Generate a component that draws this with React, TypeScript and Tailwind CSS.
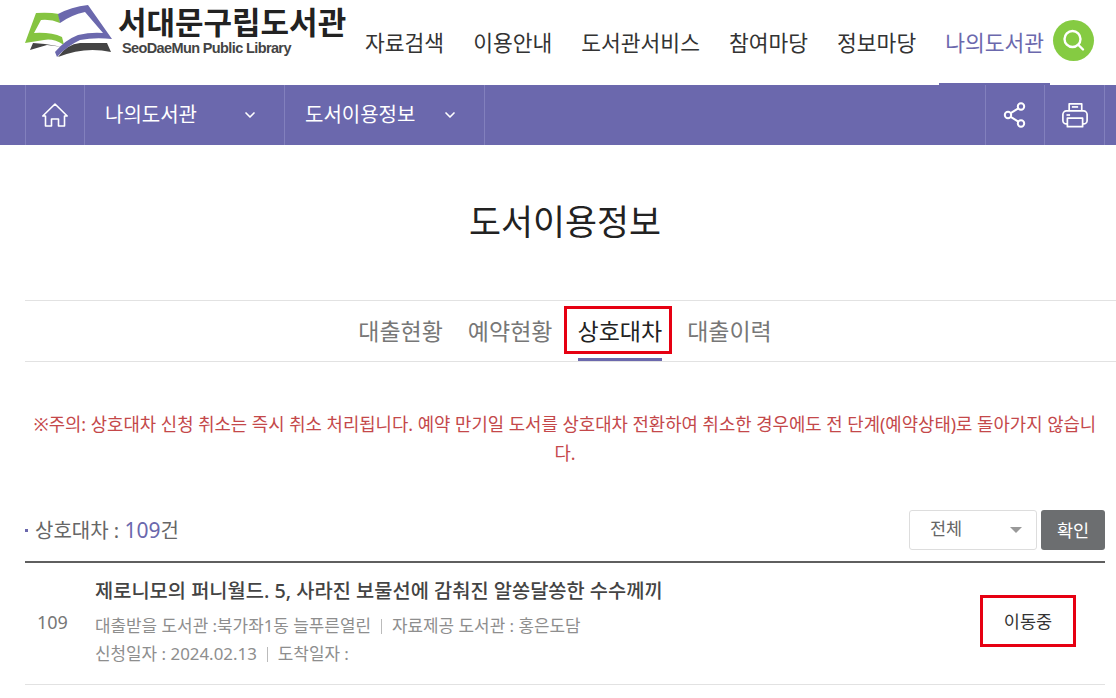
import { ChevronDown } from "lucide-react";

const font = { fontFamily: '"Noto Sans", "Noto Sans CJK KR", sans-serif' };

const menus = ["자료검색", "이용안내", "도서관서비스", "참여마당", "정보마당"];
const tabs = ["대출현황", "예약현황", "상호대차", "대출이력"];

function BookLogo() {
  return (
    <svg width="90" height="60" viewBox="0 0 90 60" className="shrink-0">
      <path d="M5 50 L8 43 L20 44 L38 47 L22 45 Z" fill="#444" />
      <path d="M33 57 Q42 44 55 43 L82 43 L86 52 Q60 46 33 57 Z" fill="#444" />
      <path d="M0 43 L11 13 Q24 12 34 14 L35 23 Q26 19 16 20 L9 33 Q26 32 37 37 L39 45 Q28 38 19 40 Z" fill="#85c441" />
      <path d="M33 14 Q46 7 63 5 L87 39 Q70 37 55 40 Q42 46 32 57 L30 52 Q40 40 53 35 Q66 32 78 33 L60 12 Q46 15 35 23 Z" fill="#6b68ad" />
    </svg>
  );
}

function Header() {
  return (
    <header className="flex h-[85px] items-start pl-[25px]">
      <div className="flex w-[340px] shrink-0 items-start">
        <BookLogo />
        <div className="ml-[3px] flex flex-col pt-[5px]">
          <span className="text-[31px] leading-[34px] font-bold whitespace-nowrap text-[#222]">서대문구립도서관</span>
          <span className="ml-[4px] text-[14.5px] leading-[18px] font-bold tracking-[-0.62px] whitespace-nowrap text-[#444]" style={{ fontFamily: '"Liberation Sans", sans-serif' }}>SeoDaeMun Public Library</span>
        </div>
      </div>
      <nav className="flex h-[85px] items-start">
        {menus.map((m) => (
          <a key={m} className="mt-[25px] mr-[29px] text-[21.5px] leading-[36px] whitespace-nowrap text-[#333]">{m}</a>
        ))}
        <div className="relative flex h-[85px] items-start">
          <a className="mt-[25px] text-[21.5px] leading-[36px] whitespace-nowrap text-[#6b68ad]">나의도서관</a>
          <span className="absolute right-[-6px] bottom-0 left-[-6px] h-[2px] bg-[#6b68ad]" />
        </div>
      </nav>
      <button className="mt-[20px] ml-[9px] flex h-[41px] w-[41px] items-center justify-center rounded-full bg-[#85cb42]">
        <svg width="28" height="28" viewBox="0 0 28 28" fill="none" stroke="white" strokeWidth="2.4">
          <circle cx="12.5" cy="12" r="8" />
          <path d="M18.5 18 L23 22.5" strokeLinecap="round" />
        </svg>
      </button>
    </header>
  );
}

function SubBar() {
  return (
    <div className="flex h-[60px] bg-[#6b68ad] pl-[25px] text-white">
      <div className="flex w-[60px] items-center justify-center border-x border-[#8280bd]">
        <svg width="26" height="24" viewBox="0 0 26 24" fill="none" stroke="white" strokeWidth="1.6" strokeLinejoin="round">
          <path d="M13 1 L0.8 13 H3.5 V23 H9.5 V16 H16.5 V23 H22.5 V13 H25.2 Z" />
        </svg>
      </div>
      {["나의도서관", "도서이용정보"].map((s) => (
        <div key={s} className="flex w-[200px] items-center justify-between border-r border-[#8280bd] pr-[26px] pl-[20px]">
          <span className="text-[20px] whitespace-nowrap text-white">{s}</span>
          <ChevronDown size={16} strokeWidth={2.5} />
        </div>
      ))}
      <div className="flex-1" />
      <div className="flex w-[60px] items-center justify-center border-x border-[#8280bd]">
        <svg width="24" height="26" viewBox="0 0 24 26" fill="none" stroke="white" strokeWidth="2">
          <circle cx="18" cy="4.5" r="3.2" />
          <circle cx="5" cy="13" r="3.2" />
          <circle cx="18" cy="21.5" r="3.2" />
          <path d="M15.3 6.3 L7.7 11.2 M7.7 14.8 L15.3 19.7" />
        </svg>
      </div>
      <div className="flex w-[60px] items-center justify-center border-r border-[#8280bd]">
        <svg width="26" height="26" viewBox="0 0 29 29" fill="none" stroke="white" strokeWidth="1.9" strokeLinejoin="round">
          <path d="M8 10 V2 H22 V10" />
          <path d="M11 5.5 H18" />
          <path d="M6 24.5 H5 A4 4 0 0 1 1 20.5 V14 A4 4 0 0 1 5 10 H24 A4 4 0 0 1 28 14 V20.5 A4 4 0 0 1 24 24.5 H23" />
          <rect x="6" y="18" width="17" height="9.5" />
          <path d="M5 14.5 H9" />
        </svg>
      </div>
      <div className="w-[11px]" />
    </div>
  );
}

function Tabs() {
  return (
    <div className="mt-[52px] -mr-[11px] flex h-[62px] justify-center gap-[25px] border-y border-[#e2e2e2] pr-[11px]">
      {tabs.map((t) => {
        const on = t === "상호대차";
        return (
          <div key={t} className={on ? "relative flex h-[60px] items-center border-b-[3px] border-[#6b68ad] pt-[3px] text-[#222]" : "flex items-center text-[#777]"}>
            <span className="text-[23px] whitespace-nowrap">{t}</span>
            {on && <span className="absolute top-[5px] -right-[10px] -left-[14px] h-[48px] border-[3px] border-[#e60012]" />}
          </div>
        );
      })}
    </div>
  );
}

function Row() {
  return (
    <div className="flex h-[124px] items-center border-t-[2px] border-b border-[#5f5f5f] border-b-[#e2e2e2]">
      <div className="w-[70px] pb-[2px] pl-[12px] text-[18px] text-[#777]">109</div>
      <div className="flex-1 pb-[2px]">
        <p className="text-[19.8px] leading-[28px] font-medium whitespace-nowrap text-[#444]">제로니모의 퍼니월드. 5, 사라진 보물선에 감춰진 알쏭달쏭한 수수께끼</p>
        <p className="mt-[7px] flex items-center text-[16.9px] leading-[28px] whitespace-nowrap text-[#8e8e8e]">
          대출받을 도서관 :북가좌1동 늘푸른열린
          <span className="mx-[10px] h-[15px] w-px bg-[#bbb]" />
          자료제공 도서관 : 홍은도담
        </p>
        <p className="flex items-center text-[16.9px] leading-[28px] whitespace-nowrap text-[#8e8e8e]">
          신청일자 : 2024.02.13
          <span className="mx-[10px] h-[15px] w-px bg-[#bbb]" />
          도착일자 :
        </p>
      </div>
      <div className="mr-[29px] mb-[5px] flex h-[52px] w-[96px] items-center justify-center border-[3px] border-[#e60012] text-[17.5px] font-normal text-[#333]">이동중</div>
    </div>
  );
}

export default function App() {
  return (
    <div className="h-[698px] w-[1116px] overflow-hidden bg-white" style={font}>
      <Header />
      <SubBar />
      <main className="pr-[11px] pl-[25px]">
        <h1 className="mt-[51px] text-center text-[34.8px] leading-[52px] font-normal text-[#222]">도서이용정보</h1>
        <Tabs />
        <p className="mt-[48px] text-center text-[17.8px] leading-[29px] text-[#c4484a]">
          ※주의: 상호대차 신청 취소는 즉시 취소 처리됩니다. 예약 만기일 도서를 상호대차 전환하여 취소한 경우에도 전 단계(예약상태)로 돌아가지 않습니다.
        </p>
        <div className="mt-[42px] flex h-[51px] items-start justify-between">
          <div className="flex items-center pt-[5px] text-[20px] text-[#666]">
            <span className="mr-[7px] h-[3px] w-[3px] bg-[#6b68ad]" />
            상호대차 :&nbsp;<span className="text-[21px] text-[#6b68ad]">109</span>건
          </div>
          <div className="flex gap-[4px]">
            <div className="flex h-[40px] w-[128px] items-center justify-between rounded-[3px] border border-[#ddd] pr-[14px] pl-[20px] text-[17.5px] text-[#666]">
              <span className="pb-[4px]">전체</span>
              <span className="h-0 w-0 border-x-[6px] border-t-[6px] border-x-transparent border-t-[#999]" />
            </div>
            <button className="h-[40px] w-[64px] rounded-[3px] bg-[#6c6e70] text-[17.5px] text-white">확인</button>
          </div>
        </div>
        <Row />
      </main>
    </div>
  );
}
